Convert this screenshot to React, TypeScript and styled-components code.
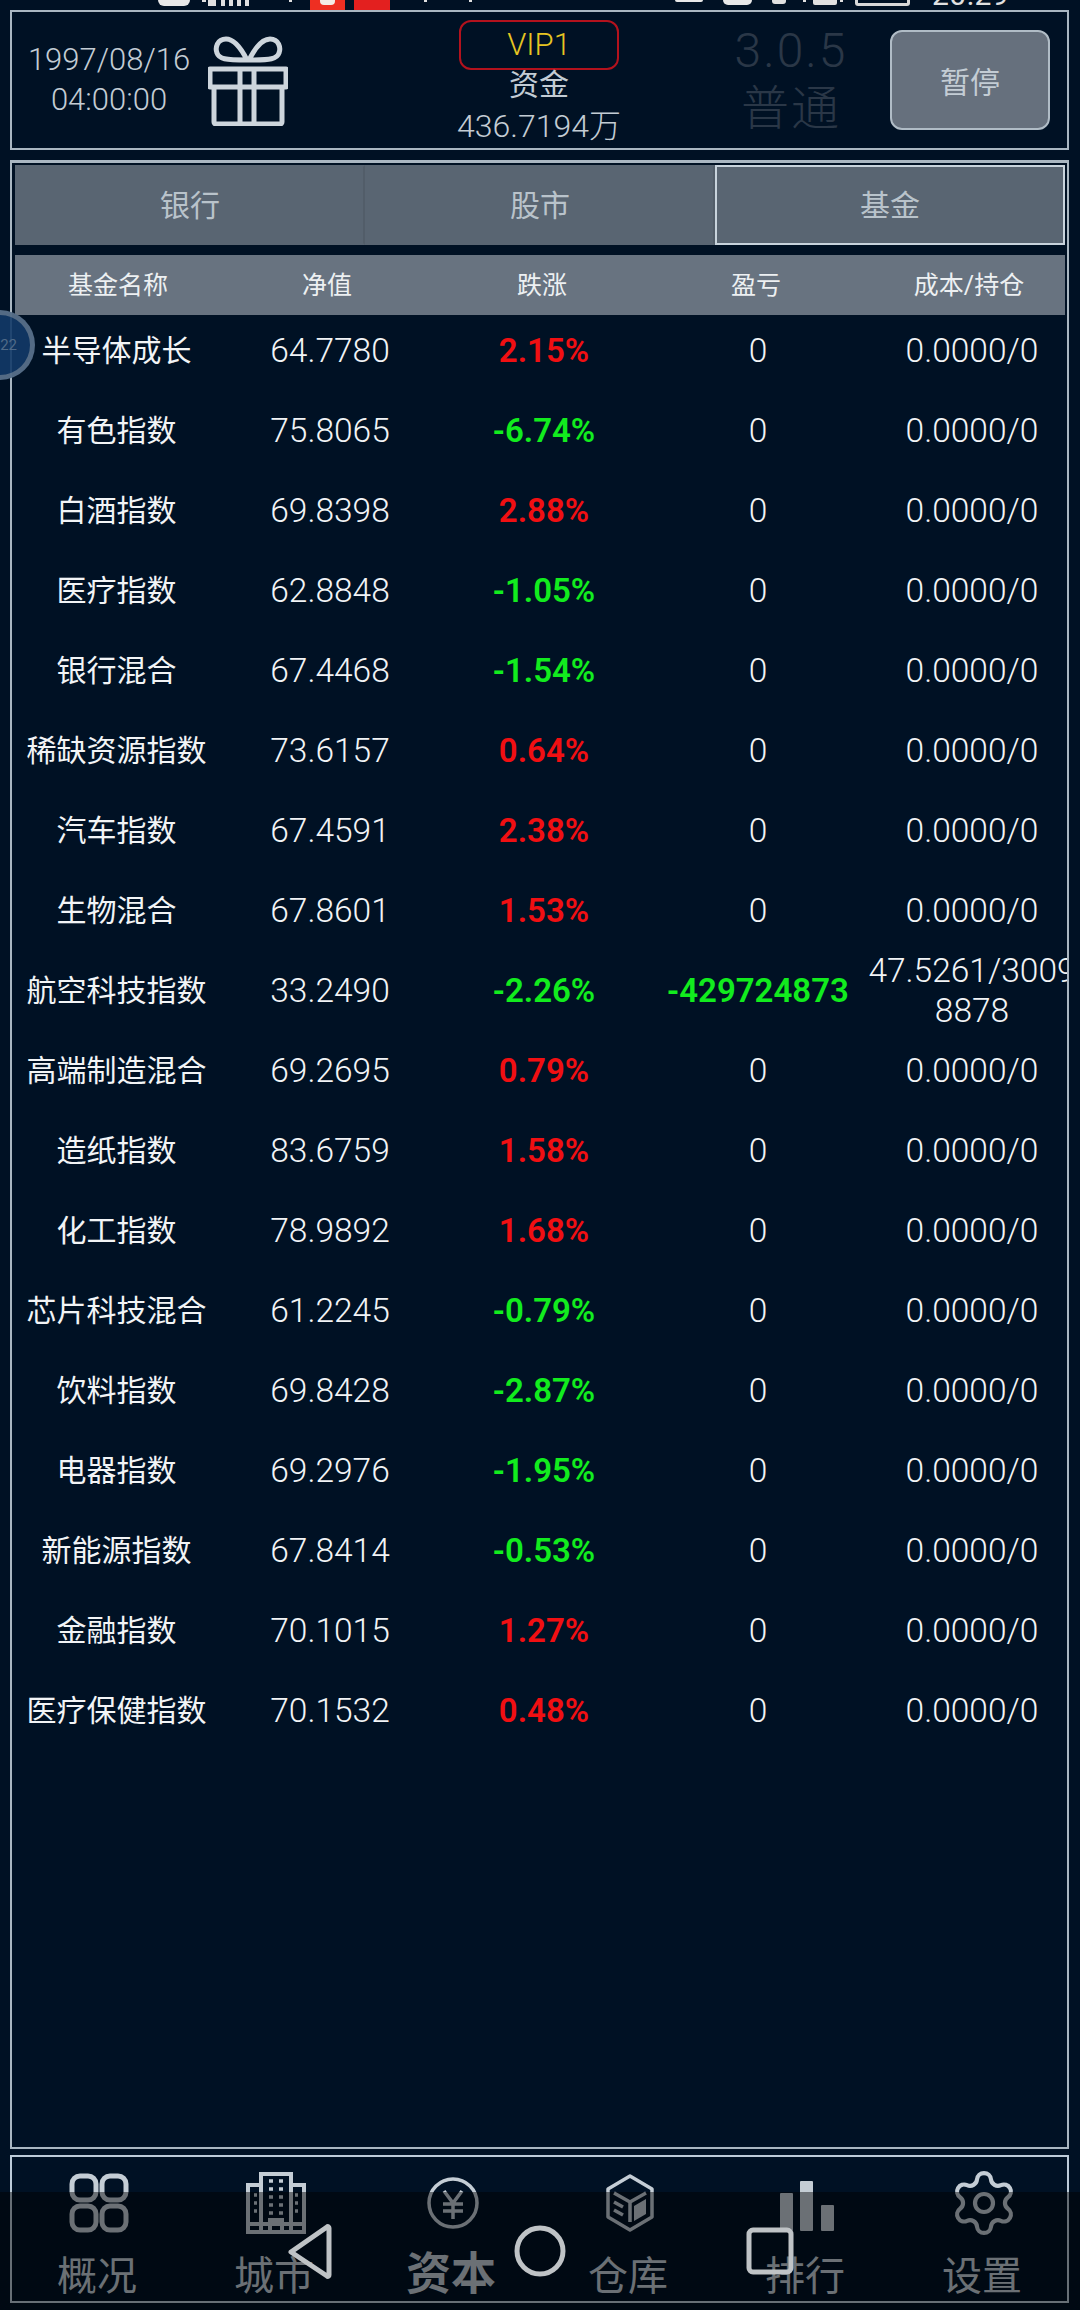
import React from "react";
import styled, { createGlobalStyle } from "styled-components";
import { Settings } from "lucide-react";

const FONT = `Roboto, "Noto Sans CJK SC", sans-serif`;

type Fund = { name: string; value: string; change: string; pnl?: string; cost?: string };

const funds: Fund[] = [
  { name: "半导体成长", value: "64.7780", change: "2.15%" },
  { name: "有色指数", value: "75.8065", change: "-6.74%" },
  { name: "白酒指数", value: "69.8398", change: "2.88%" },
  { name: "医疗指数", value: "62.8848", change: "-1.05%" },
  { name: "银行混合", value: "67.4468", change: "-1.54%" },
  { name: "稀缺资源指数", value: "73.6157", change: "0.64%" },
  { name: "汽车指数", value: "67.4591", change: "2.38%" },
  { name: "生物混合", value: "67.8601", change: "1.53%" },
  { name: "航空科技指数", value: "33.2490", change: "-2.26%", pnl: "-429724873", cost: "47.5261/30098878" },
  { name: "高端制造混合", value: "69.2695", change: "0.79%" },
  { name: "造纸指数", value: "83.6759", change: "1.58%" },
  { name: "化工指数", value: "78.9892", change: "1.68%" },
  { name: "芯片科技混合", value: "61.2245", change: "-0.79%" },
  { name: "饮料指数", value: "69.8428", change: "-2.87%" },
  { name: "电器指数", value: "69.2976", change: "-1.95%" },
  { name: "新能源指数", value: "67.8414", change: "-0.53%" },
  { name: "金融指数", value: "70.1015", change: "1.27%" },
  { name: "医疗保健指数", value: "70.1532", change: "0.48%" },
];

// what is left of the status bar above the game frame: [x, width, height, colour, radius]
const statusBits: [number, number, number, string, number][] = [
  [158, 32, 6, "#e8e8e8", 6],
  [202, 4, 2, "#e0e0e0", 0],
  [208, 8, 6, "#e0e0e0", 0],
  [221, 4, 6, "#e0e0e0", 0],
  [229, 4, 6, "#e0e0e0", 0],
  [237, 4, 6, "#e0e0e0", 0],
  [245, 4, 6, "#e0e0e0", 0],
  [289, 3, 2, "#e0e0e0", 0],
  [310, 35, 10, "#ee2f22", 0],
  [320, 15, 5, "#f4ece6", 4],
  [354, 36, 10, "#e3201f", 0],
  [424, 3, 2, "#e0e0e0", 0],
  [469, 3, 2, "#e0e0e0", 0],
  [675, 28, 2, "#e8e8e8", 8],
  [723, 29, 5, "#e8e8e8", 8],
  [772, 14, 4, "#e0e0e0", 3],
  [803, 3, 2, "#e0e0e0", 0],
  [813, 24, 5, "#e0e0e0", 2],
  [840, 3, 2, "#e0e0e0", 0],
  [855, 55, 6, "#d8d8d8", 3],
  [858, 49, 3, "#001124", 0],
];

const GlobalStyle = createGlobalStyle`
  html, body { margin: 0; padding: 0; background: #001124; }
  * { box-sizing: border-box; }
`;

const Page = styled.div`
  position: relative;
  width: 1080px;
  height: 2310px;
  overflow: hidden;
  background: #001124;
  font-family: ${FONT};
  padding: 10px 11px 7px 10px;
  display: flex;
  flex-direction: column;
`;

const StatusClip = styled.div`
  position: absolute;
  top: 0;
  left: 0;
  right: 0;
  height: 10px;
  overflow: hidden;
`;

const StatusBit = styled.span<{ $x: number; $w: number; $h: number; $c: string; $r: number }>`
  position: absolute;
  top: 0;
  left: ${(p) => p.$x}px;
  width: ${(p) => p.$w}px;
  height: ${(p) => p.$h}px;
  background: ${(p) => p.$c};
  border-radius: 0 0 ${(p) => p.$r}px ${(p) => p.$r}px;
`;

const StatusTime = styled.span`
  position: absolute;
  left: 932px;
  top: -20px;
  font-size: 30px;
  line-height: 30px;
  letter-spacing: 0.5px;
  color: #e0e0e0;
`;

const Frame = styled.div`
  border: 2px solid #a9b6c1;
`;

const Header = styled(Frame)`
  height: 140px;
  flex: none;
  display: grid;
  grid-template-columns: 188px 240px 198px 252px 160px 1fr;
  align-items: center;
  color: #c3ccd4;
`;

const DateBlock = styled.div`
  font-size: 31px;
  font-weight: 300;
  line-height: 40px;
  text-align: center;
  padding-left: 6px;
  white-space: nowrap;
`;

const GiftBox = styled.div`
  display: flex;
  padding-left: 8px;
  padding-top: 2px;
`;

const Funds = styled.div`
  display: flex;
  flex-direction: column;
  align-items: center;
  height: 100%;
  padding-top: 8px;
`;

const VipTag = styled.div`
  width: 160px;
  height: 50px;
  flex: none;
  border: 2px solid #b3121d;
  border-radius: 12px;
  color: #e6c522;
  font-size: 31px;
  font-weight: 300;
  line-height: 46px;
  text-align: center;
`;

const FundsLabel = styled.div`
  font-size: 30px;
  line-height: 36px;
  margin-top: -3px;
`;

const FundsValue = styled.div`
  font-size: 32px;
  font-weight: 300;
  line-height: 40px;
  margin-top: 3px;
  white-space: nowrap;
`;

const Version = styled.div`
  color: #2a3747;
  font-size: 48px;
  font-weight: 300;
  letter-spacing: 2px;
  line-height: 58px;
  text-align: center;
  padding-left: 54px;
`;

const PauseButton = styled.div`
  height: 100px;
  border: 2px solid #b0bcc6;
  border-radius: 12px;
  background: #66707d;
  color: #c3ccd4;
  font-size: 30px;
  display: flex;
  align-items: center;
  justify-content: center;
`;

const TablePanel = styled(Frame)`
  margin-top: 10px;
  height: 1989px;
  flex: none;
  padding: 2px 2px 0 3px;
  border-top-width: 3px;
  overflow: hidden;
`;

const Tabs = styled.div`
  display: grid;
  grid-template-columns: 350px 350px 1fr;
  height: 80px;
  background: #596572;
`;

const Tab = styled.div<{ $active?: boolean }>`
  display: flex;
  align-items: center;
  justify-content: center;
  padding-bottom: 4px;
  color: #b9c3cb;
  font-size: 30px;
  border: 2px solid ${(p) => (p.$active ? "#c8d3dc" : "transparent")};
  border-right-color: ${(p) => (p.$active ? "#c8d3dc" : "#525d69")};
`;

const ColumnHead = styled.div`
  margin-top: 10px;
  height: 60px;
  padding-bottom: 4px;
  background: #687380;
  display: grid;
  grid-template-columns: 206px 212px 218px 210px 1fr;
  align-items: center;
  justify-items: center;
  color: #edf0f2;
  font-size: 25px;
  span:last-child {
    margin-left: 12px;
  }
`;

const RowList = styled.div`
  width: 1070px;
  margin-left: -6px;
`;

const Row = styled.div`
  display: grid;
  grid-template-columns: repeat(5, 214px);
  grid-template-rows: 72px;
  height: 80px;
  align-items: center;
  justify-items: center;
  color: #f2f4f6;
  font-size: 33.5px;
  font-weight: 300;
  line-height: 40px;
`;

const NameCell = styled.div`
  font-size: 30px;
  font-weight: 400;
  white-space: nowrap;
  padding-left: 1px;
`;

const Cell = styled.div<{ $tone?: "up" | "down" }>`
  text-align: center;
  width: 100%;
  word-break: break-all;
  font-size: ${(p) => (p.$tone ? "33px" : "inherit")};
  font-weight: ${(p) => (p.$tone ? 600 : 300)};
  color: ${(p) => (p.$tone === "up" ? "#f10f12" : p.$tone === "down" ? "#12ec1e" : "inherit")};
`;

const FloatBall = styled.div`
  position: absolute;
  left: -35px;
  top: 310px;
  width: 70px;
  height: 70px;
  border-radius: 50%;
  background: rgba(18, 58, 104, 0.9);
  border: 5px solid rgba(120, 135, 150, 0.65);
  color: #4f6a88;
  font-size: 15px;
  display: flex;
  align-items: center;
  justify-content: flex-end;
  padding-right: 13px;
  z-index: 2;
`;

const NavPanel = styled.div`
  margin-top: 6px;
  height: 148px;
  flex: none;
  border: 2px solid #bccbd8;
  display: grid;
  grid-template-columns: repeat(6, 177px);
  justify-content: center;
`;

const NavItem = styled.div`
  display: flex;
  flex-direction: column;
  align-items: center;
  color: #c4cdd5;
  padding-top: 15px;
  svg {
    display: block;
    flex: none;
  }
`;

const NavIconSlot = styled.div`
  height: 62px;
  padding-left: 3px;
  display: flex;
  align-items: center;
  justify-content: center;
`;

const NavLabel = styled.div<{ $active?: boolean }>`
  margin-top: ${(p) => (p.$active ? "18px" : "20px")};
  font-size: ${(p) => (p.$active ? "45px" : "40px")};
  font-weight: ${(p) => (p.$active ? 700 : 400)};
  line-height: 46px;
  white-space: nowrap;
`;

const SystemBar = styled.div`
  position: absolute;
  left: 0;
  right: 0;
  bottom: 0;
  height: 118px;
  background: rgba(0, 0, 0, 0.45);
  pointer-events: none;
`;

const SystemKeys = styled.svg`
  position: absolute;
  left: 0;
  bottom: 0;
  width: 1080px;
  height: 118px;
`;

const RankGlyph = styled.svg`
  margin-top: 6px;
`;

const Gift = () => (
  <svg width="80" height="90" viewBox="0 0 80 90" fill="none" stroke="#cdd5dc" strokeWidth="5" strokeLinejoin="round">
    <path d="M39 24C33 12 26 3 18 3 9 3 7 12 9 17c2 6 8 7 30 7Zm2 0C47 12 54 3 62 3c9 0 11 9 9 14-2 6-8 7-30 7Z" />
    <path d="M2 33h76v18H2zM6 51v35a2 2 0 0 0 2 2h64a2 2 0 0 0 2-2V51M32 33v55M46 33v55" />
  </svg>
);

const GridIcon = () => (
  <svg width="60" height="60" viewBox="0 0 60 60" fill="none" stroke="currentColor" strokeWidth="5">
    <rect x="3" y="3" width="24" height="24" rx="8" />
    <rect x="33" y="3" width="24" height="24" rx="8" />
    <rect x="3" y="33" width="24" height="24" rx="8" />
    <rect x="33" y="33" width="24" height="24" rx="8" />
  </svg>
);

const CityIcon = () => (
  <svg width="60" height="62" viewBox="0 0 60 62" fill="none" stroke="currentColor" strokeWidth="4">
    <path d="M2 60V13h13M58 60V13H45M15 60V2h30v58M0 60h60M2 52h56" />
    <path d="M24 60V48h12v12" />
    <path
      d="M23 9h4M33 9h4M23 17h4M33 17h4M23 25h4M33 25h4M23 33h4M33 33h4M23 41h4M33 41h4M8 23h3M8 31h3M8 39h3M49 23h3M49 31h3M49 39h3"
      strokeWidth="3.5"
    />
  </svg>
);

const YenIcon = () => (
  <svg width="52" height="52" viewBox="0 0 52 52" fill="none" stroke="currentColor" strokeWidth="3.5">
    <circle cx="26" cy="26" r="24" />
    <path d="M17 14l9 12 9-12M16 27h20M16 34h20M26 26v16" />
  </svg>
);

const CubeIcon = () => (
  <svg width="48" height="58" viewBox="0 0 48 58" fill="none" stroke="currentColor" strokeWidth="3.5" strokeLinejoin="round">
    <path d="M24 2l22 13v28L24 56 2 43V15Z" />
    <path d="M8 19l16 9 16-9M24 28v20M8 28l9 5M8 36l9 5" />
    <path d="M28 32l12-7v15l-12 7Z" fill="currentColor" stroke="none" />
  </svg>
);

const RankIcon = () => (
  <RankGlyph width="54" height="50" viewBox="0 0 54 50" fill="currentColor">
    <rect x="0" y="12" width="13" height="38" rx="1" />
    <rect x="20" y="0" width="13" height="50" rx="1" />
    <rect x="41" y="24" width="13" height="26" rx="1" />
  </RankGlyph>
);

const App = () => (
  <Page>
    <GlobalStyle />
    <StatusClip>
      {statusBits.map(([x, w, h, c, r]) => (
        <StatusBit key={`${x}-${w}`} $x={x} $w={w} $h={h} $c={c} $r={r} />
      ))}
      <StatusTime>20:29</StatusTime>
    </StatusClip>
    <Header>
      <DateBlock>
        1997/08/16
        <br />
        04:00:00
      </DateBlock>
      <GiftBox>
        <Gift />
      </GiftBox>
      <Funds>
        <VipTag>VIP1</VipTag>
        <FundsLabel>资金</FundsLabel>
        <FundsValue>436.7194万</FundsValue>
      </Funds>
      <Version>
        3.0.5
        <br />
        普通
      </Version>
      <PauseButton>暂停</PauseButton>
    </Header>

    <TablePanel>
      <Tabs>
        <Tab>银行</Tab>
        <Tab>股市</Tab>
        <Tab $active>基金</Tab>
      </Tabs>
      <ColumnHead>
        <span>基金名称</span>
        <span>净值</span>
        <span>跌涨</span>
        <span>盈亏</span>
        <span>成本/持仓</span>
      </ColumnHead>
      <RowList>
        {funds.map((f) => (
          <Row key={f.name}>
            <NameCell>{f.name}</NameCell>
            <Cell>{f.value}</Cell>
            <Cell $tone={f.change.startsWith("-") ? "down" : "up"}>{f.change}</Cell>
            <Cell $tone={f.pnl ? "down" : undefined}>{f.pnl ?? "0"}</Cell>
            <Cell>{f.cost ?? "0.0000/0"}</Cell>
          </Row>
        ))}
      </RowList>
    </TablePanel>

    <FloatBall>22</FloatBall>

    <NavPanel>
      <NavItem>
        <NavIconSlot><GridIcon /></NavIconSlot>
        <NavLabel>概况</NavLabel>
      </NavItem>
      <NavItem>
        <NavIconSlot><CityIcon /></NavIconSlot>
        <NavLabel>城市</NavLabel>
      </NavItem>
      <NavItem>
        <NavIconSlot><YenIcon /></NavIconSlot>
        <NavLabel $active>资本</NavLabel>
      </NavItem>
      <NavItem>
        <NavIconSlot><CubeIcon /></NavIconSlot>
        <NavLabel>仓库</NavLabel>
      </NavItem>
      <NavItem>
        <NavIconSlot><RankIcon /></NavIconSlot>
        <NavLabel>排行</NavLabel>
      </NavItem>
      <NavItem>
        <NavIconSlot><Settings size={72} strokeWidth={1.4} /></NavIconSlot>
        <NavLabel>设置</NavLabel>
      </NavItem>
    </NavPanel>

    <SystemBar />
    <SystemKeys viewBox="0 0 1080 118" fill="none" stroke="#bfc3c6" strokeWidth="5" strokeLinejoin="round">
      <path d="M291 60l36-25c1-1 2 0 2 1v47c0 1-1 2-2 1Z" />
      <circle cx="540" cy="59" r="23" />
      <rect x="749" y="38" width="42" height="42" rx="4" />
    </SystemKeys>
  </Page>
);

export default App;
